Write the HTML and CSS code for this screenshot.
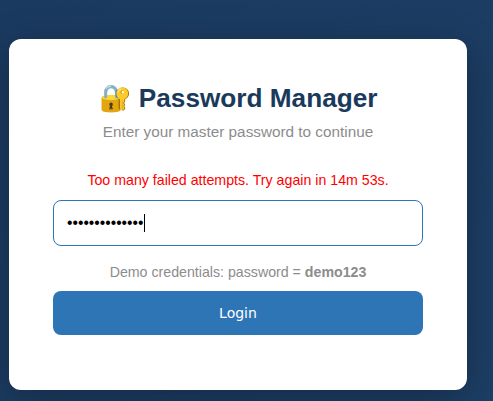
FILE: index.html
```html
<!doctype html>
<html lang="en">
<head>
    <meta charset="UTF-8">
    <title>Password Manager</title>
    <link rel="stylesheet" href="styles.css">
</head>
<body>
    <div class="card">
        <h1 class="title">🔐 Password Manager</h1>
        <p class="subtitle">Enter your master password to continue</p>
        <p class="error">Too many failed attempts. Try again in 14m 53s.</p>
        <div class="field">
            <input class="password" type="password" value="aaaaaaaaaaaaaa">
            <!-- text cursor, headless browser does not paint one -->
            <span class="caret"></span>
        </div>
        <p class="hint">Demo credentials: password = <b>demo123</b></p>
        <button class="login">Login</button>
    </div>
</body>
</html>
```

FILE: styles.css
```css
html, body {
    height: 100%;
}
body {
    margin: 0;
    overflow: hidden;
    background: linear-gradient(135deg, #1b3a60, #1d3f66);
    font-family: "Liberation Sans", Arial, sans-serif;
}
.card {
    box-sizing: border-box;
    width: 458px;
    height: 351px;
    margin: 39px 0 0 9px;
    padding: 43px 44px 44px;
    background: #fff;
    border-radius: 12px;
    text-align: center;
    box-shadow: 0 10px 40px rgba(0, 0, 0, .3);
}
.title {
    margin: 0;
    font-size: 26.2px;
    line-height: 32px;
    color: #1a3a5c;
}
.subtitle {
    margin: 9px 0 0;
    font-size: 15.3px;
    line-height: 18px;
    color: #8c8c8c;
}
.error {
    margin: 31px 0 0;
    font-size: 14.2px;
    line-height: 16px;
    color: #f00;
}
.field {
    position: relative;
    margin-top: 12px;
}
.password {
    display: block;
    box-sizing: border-box;
    width: 100%;
    height: 46px;
    padding: 0 13px;
    border: 1px solid #2e75b6;
    border-radius: 8px;
    outline: none;
    font-size: 15.6px;
}
.caret {
    position: absolute;
    left: 91px;
    top: 14px;
    width: 1px;
    height: 18px;
    background: #000;
}
.hint {
    margin: 18px 0 0;
    font-size: 14.2px;
    line-height: 16px;
    color: #8c8c8c;
}
.login {
    display: block;
    width: 100%;
    height: 44px;
    margin-top: 11px;
    border: 0;
    border-radius: 8px;
    background: #2e75b6;
    color: #fff;
    font-family: "DejaVu Sans", sans-serif;
    font-size: 14px;
}
```
